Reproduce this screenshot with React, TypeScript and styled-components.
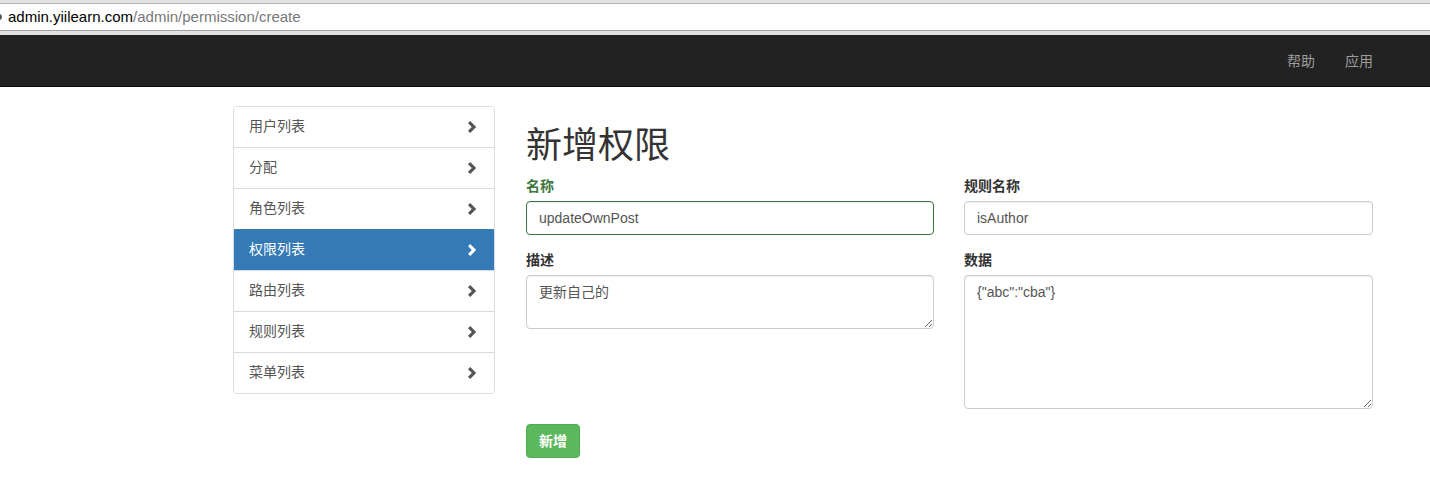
import React from 'react';
import styled, { createGlobalStyle } from 'styled-components';

const GlobalStyle = createGlobalStyle`
  html, body {
    margin: 0;
    padding: 0;
    background: #fff;
  }
  body {
    font-family: "Liberation Sans", "Noto Sans CJK SC", sans-serif;
    font-size: 14px;
    line-height: 1.42857;
    color: #333;
  }
  * {
    box-sizing: border-box;
  }
`;

const AddressBar = styled.div`
  height: 35px;
  background: #e2e2e2;
  padding-top: 3px;
`;

const UrlField = styled.div`
  height: 28px;
  background: #fff;
  border-top: 1px solid #b8b8b8;
  border-bottom: 1px solid #a0a0a0;
  display: flex;
  align-items: center;
  padding-left: 8px;
  font-size: 15px;
  white-space: nowrap;
  position: relative;

  &::before {
    content: '';
    position: absolute;
    left: -4px;
    top: 10px;
    width: 6px;
    height: 6px;
    border-radius: 50%;
    background: #555;
  }
`;

const Host = styled.span`
  color: #000;
`;

const Path = styled.span`
  color: #777;
`;

const Navbar = styled.nav`
  height: 52px;
  background: #222;
  border-bottom: 1px solid #080808;
  display: flex;
  justify-content: flex-end;
  padding-right: 42px;
  padding-top: 1px;
`;

const NavLink = styled.a`
  display: block;
  padding: 15px;
  line-height: 20px;
  color: #9d9d9d;
  font-size: 14px;
  text-decoration: none;
`;

const Page = styled.div`
  display: grid;
  grid-template-columns: 262px 847px;
  column-gap: 31px;
  padding-left: 233px;
  padding-top: 19px;
`;

const ListGroup = styled.div`
  border: 1px solid #ddd;
  border-radius: 4px;
  overflow: hidden;
  align-self: start;
`;

const ListItem = styled.a<{ $active?: boolean }>`
  display: flex;
  align-items: center;
  justify-content: space-between;
  height: 41px;
  padding: 0 15px;
  background: ${(p) => (p.$active ? '#337ab7' : '#fff')};
  color: ${(p) => (p.$active ? '#fff' : '#555')};
  border-top: 1px solid ${(p) => (p.$active ? '#337ab7' : '#ddd')};
  text-decoration: none;
  font-size: 14px;

  &:first-child {
    border-top: none;
    height: 40px;
  }
`;

const Chevron = ({ color }: { color: string }) => (
  <svg width="10" height="12" viewBox="0 0 10 12" style={{ marginRight: 2 }}>
    <polygon points="1,2.2 3.2,0 9.2,6 3.2,12 1,9.8 4.8,6" fill={color} />
  </svg>
);

const Main = styled.div``;

const Title = styled.h1`
  margin: 20px 0 10px;
  font-size: 36px;
  font-weight: normal;
  line-height: 1.1;
  color: #333;
`;

const FormRow = styled.div`
  display: grid;
  grid-template-columns: 408px 409px;
  column-gap: 30px;
`;

const Column = styled.div``;

const FormGroup = styled.div`
  margin-bottom: 15px;
`;

const Label = styled.label<{ $success?: boolean }>`
  display: inline-block;
  margin-bottom: 5px;
  font-weight: bold;
  line-height: 20px;
  color: ${(p) => (p.$success ? '#3c763d' : '#333')};
`;

const Input = styled.input<{ $success?: boolean }>`
  display: block;
  width: 100%;
  height: 34px;
  padding: 6px 12px;
  font-family: inherit;
  font-size: 14px;
  line-height: 1.42857;
  color: #555;
  background: #fff;
  border: 1px solid ${(p) => (p.$success ? '#3c763d' : '#ccc')};
  border-radius: 4px;
  box-shadow: inset 0 1px 1px rgba(0, 0, 0, 0.075);
  outline: none;
`;

const TextArea = styled.textarea`
  display: block;
  width: 100%;
  padding: 6px 12px;
  font-family: inherit;
  font-size: 14px;
  line-height: 20px;
  color: #555;
  background: #fff;
  border: 1px solid #ccc;
  border-radius: 4px;
  box-shadow: inset 0 1px 1px rgba(0, 0, 0, 0.075);
  outline: none;
  resize: vertical;
`;

const SubmitButton = styled.button`
  display: inline-block;
  height: 34px;
  padding: 6px 12px;
  font-family: inherit;
  font-size: 14px;
  font-weight: bold;
  line-height: 20px;
  color: #fff;
  background: #5cb85c;
  border: 1px solid #4cae4c;
  border-radius: 4px;
`;

const menu = ['用户列表', '分配', '角色列表', '权限列表', '路由列表', '规则列表', '菜单列表'];

export default function App() {
  return (
    <>
      <GlobalStyle />
      <AddressBar>
        <UrlField>
          <Host>admin.yiilearn.com</Host>
          <Path>/admin/permission/create</Path>
        </UrlField>
      </AddressBar>
      <Navbar>
        <NavLink>帮助</NavLink>
        <NavLink>应用</NavLink>
      </Navbar>
      <Page>
        <ListGroup>
          {menu.map((m) => (
            <ListItem key={m} $active={m === '权限列表'}>
              <span>{m}</span>
              <Chevron color={m === '权限列表' ? '#fff' : '#555'} />
            </ListItem>
          ))}
        </ListGroup>
        <Main>
          <Title>新增权限</Title>
          <FormRow>
            <Column>
              <FormGroup>
                <Label $success>名称</Label>
                <Input $success defaultValue="updateOwnPost" />
              </FormGroup>
              <FormGroup>
                <Label>描述</Label>
                <TextArea rows={2} defaultValue="更新自己的" />
              </FormGroup>
            </Column>
            <Column>
              <FormGroup>
                <Label>规则名称</Label>
                <Input defaultValue="isAuthor" />
              </FormGroup>
              <FormGroup>
                <Label>数据</Label>
                <TextArea rows={6} defaultValue={'{"abc":"cba"}'} />
              </FormGroup>
            </Column>
          </FormRow>
          <SubmitButton>新增</SubmitButton>
        </Main>
      </Page>
    </>
  );
}
